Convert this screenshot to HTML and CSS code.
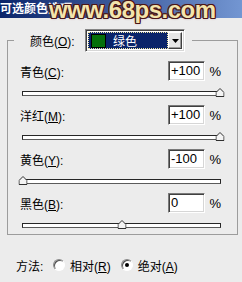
FILE: index.html
```html
<!DOCTYPE html>
<html lang="zh">
<head>
    <meta charset="UTF-8">
    <meta name="viewport" content="width=device-width, initial-scale=1.0">
    <title>可选颜色选项</title>
    <link rel="stylesheet" href="styles.css">
</head>
<body>

    <div class="title-bar">可选颜色选项</div>
    <div class="watermark">www.68ps.com</div>

    <fieldset class="colors">
        <legend class="color-pick">
            <span class="label">颜色(<u>O</u>):</span>
            <div class="combo">
                <div class="combo-value"><span class="swatch"></span>绿色</div>
                <div class="combo-arrow">
                    <svg width="7" height="4" viewBox="0 0 7 4"><polygon points="0,0 7,0 3.5,4" fill="#000"/></svg>
                </div>
            </div>
        </legend>

        <div class="channel">
            <div class="channel-top">
                <span class="label">青色(<u>C</u>):</span>
                <span class="value">+100</span>
                <span class="pct">%</span>
            </div>
            <div class="track">
                <svg class="thumb" style="left: 100%" width="9" height="9" viewBox="0 0 9 9"><polygon points="4.5,0.5 8.5,4.5 8.5,8.5 0.5,8.5 0.5,4.5" fill="#f4f4f4" stroke="#303030"/></svg>
            </div>
        </div>

        <div class="channel">
            <div class="channel-top">
                <span class="label">洋红(<u>M</u>):</span>
                <span class="value">+100</span>
                <span class="pct">%</span>
            </div>
            <div class="track">
                <svg class="thumb" style="left: 100%" width="9" height="9" viewBox="0 0 9 9"><polygon points="4.5,0.5 8.5,4.5 8.5,8.5 0.5,8.5 0.5,4.5" fill="#f4f4f4" stroke="#303030"/></svg>
            </div>
        </div>

        <div class="channel">
            <div class="channel-top">
                <span class="label">黄色(<u>Y</u>):</span>
                <span class="value">-100</span>
                <span class="pct">%</span>
            </div>
            <div class="track">
                <svg class="thumb" style="left: 0%" width="9" height="9" viewBox="0 0 9 9"><polygon points="4.5,0.5 8.5,4.5 8.5,8.5 0.5,8.5 0.5,4.5" fill="#f4f4f4" stroke="#303030"/></svg>
            </div>
        </div>

        <div class="channel">
            <div class="channel-top">
                <span class="label">黑色(<u>B</u>):</span>
                <span class="value">0</span>
                <span class="pct">%</span>
            </div>
            <div class="track">
                <svg class="thumb" style="left: 50%" width="9" height="9" viewBox="0 0 9 9"><polygon points="4.5,0.5 8.5,4.5 8.5,8.5 0.5,8.5 0.5,4.5" fill="#f4f4f4" stroke="#303030"/></svg>
            </div>
        </div>
    </fieldset>

    <div class="method">
        <span class="method-label">方法:</span>
        <span class="radio"></span>
        <span class="radio-text">相对(<u>R</u>)</span>
        <span class="radio checked"></span>
        <span class="radio-text">绝对(<u>A</u>)</span>
    </div>

</body>
</html>
```

FILE: styles.css
```css
body {
    font-family: 'Liberation Sans', 'Noto Sans CJK SC', sans-serif;
    font-size: 12px;
    margin: 0;
    padding: 0;
    width: 242px;
    height: 282px;
    overflow: hidden;
    position: relative;
    background: #ececec;
    color: #000;
}

u {
    text-decoration: underline;
    text-underline-offset: 1px;
}

.title-bar {
    height: 18px;
    line-height: 18px;
    background: linear-gradient(to right, #0a246a, #7396d2);
    color: #fff;
    font-weight: bold;
    font-size: 12px;
}

/* site watermark stamped over the title */
.watermark {
    position: absolute;
    left: 49px;
    top: 0;
    line-height: 20px;
    font-family: 'Liberation Sans', sans-serif;
    font-weight: bold;
    font-size: 24px;
    letter-spacing: -0.5px;
    color: #f3e4ac;
    text-shadow:
        1px 0 0 #4a1618, -1px 0 0 #4a1618, 0 1px 0 #4a1618, 0 -1px 0 #4a1618,
        1px 1px 0 #4a1618, -1px -1px 0 #4a1618, 1px -1px 0 #4a1618, -1px 1px 0 #4a1618,
        0 0 3px #8a5a60;
}

.colors {
    margin: 11px 4px 0 7px;
    padding: 0 16px 5px 12px;
    border: 1px solid #9c9c9c;
    box-sizing: border-box;
    height: 206px;
}

.color-pick {
    display: flex;
    align-items: center;
    margin-left: -6px;
    padding: 0 7px 0 16px;
}

.color-pick .label {
    width: 55px;
}

.combo {
    display: flex;
    width: 100px;
    height: 23px;
    box-sizing: border-box;
    padding: 2px;
    border: 1px solid;
    border-color: #858585 #fff #fff #858585;
    box-shadow: inset 1px 1px #404040, inset -1px -1px #d6d6d6;
    background: #fff;
}

.combo-value {
    flex: 1;
    display: flex;
    align-items: center;
    background: #0a246a;
    color: #fff;
    outline: 1px dotted #f0e6a0;
    outline-offset: -1px;
}

.swatch {
    width: 15px;
    height: 14px;
    box-sizing: border-box;
    margin: 0 7px 0 3px;
    background: #05700a;
    border: 1px solid #000;
}

.combo-arrow {
    width: 14px;
    display: flex;
    align-items: center;
    justify-content: center;
    background: #e6e6e6;
    box-sizing: border-box;
    border: 1px solid;
    border-color: #fff #404040 #404040 #fff;
    box-shadow: inset -1px -1px #9a9a9a;
}

.channel {
    margin-top: 9px;
}

.channel-top {
    display: flex;
    align-items: center;
    height: 20px;
}

.channel-top .label {
    flex: 1;
}

.value {
    width: 37px;
    height: 20px;
    box-sizing: border-box;
    padding-left: 2px;
    line-height: 17px;
    font-size: 13px;
    background: #fff;
    border: 1px solid;
    border-color: #7a7a7a #fff #fff #7a7a7a;
    box-shadow: inset 1px 1px #404040, inset -1px -1px #d6d6d6;
}

.pct {
    width: 16px;
    text-align: right;
    font-size: 13px;
}

.track {
    position: relative;
    margin: 10px 0 0 2px;
    height: 5px;
    box-sizing: border-box;
    border: 1px solid #262626;
    border-bottom-color: #5a5a5a;
    background: #fff;
}

.thumb {
    position: absolute;
    bottom: -2px;
    transform: translateX(-50%);
}

.method {
    display: flex;
    align-items: center;
    margin-top: 23px;
    padding-left: 16px;
    height: 14px;
}

.method-label {
    width: 37px;
}

.radio {
    width: 12px;
    height: 12px;
    box-sizing: border-box;
    border-radius: 50%;
    border: 1px solid;
    border-color: #8a8a8a #fff #fff #8a8a8a;
    box-shadow: inset 1px 1px #505050;
    background: #fff;
    position: relative;
}

.radio.checked::after {
    content: '';
    position: absolute;
    left: 3px;
    top: 3px;
    width: 4px;
    height: 4px;
    border-radius: 50%;
    background: #000;
}

.radio-text {
    margin: 0 10px 0 5px;
}
```
